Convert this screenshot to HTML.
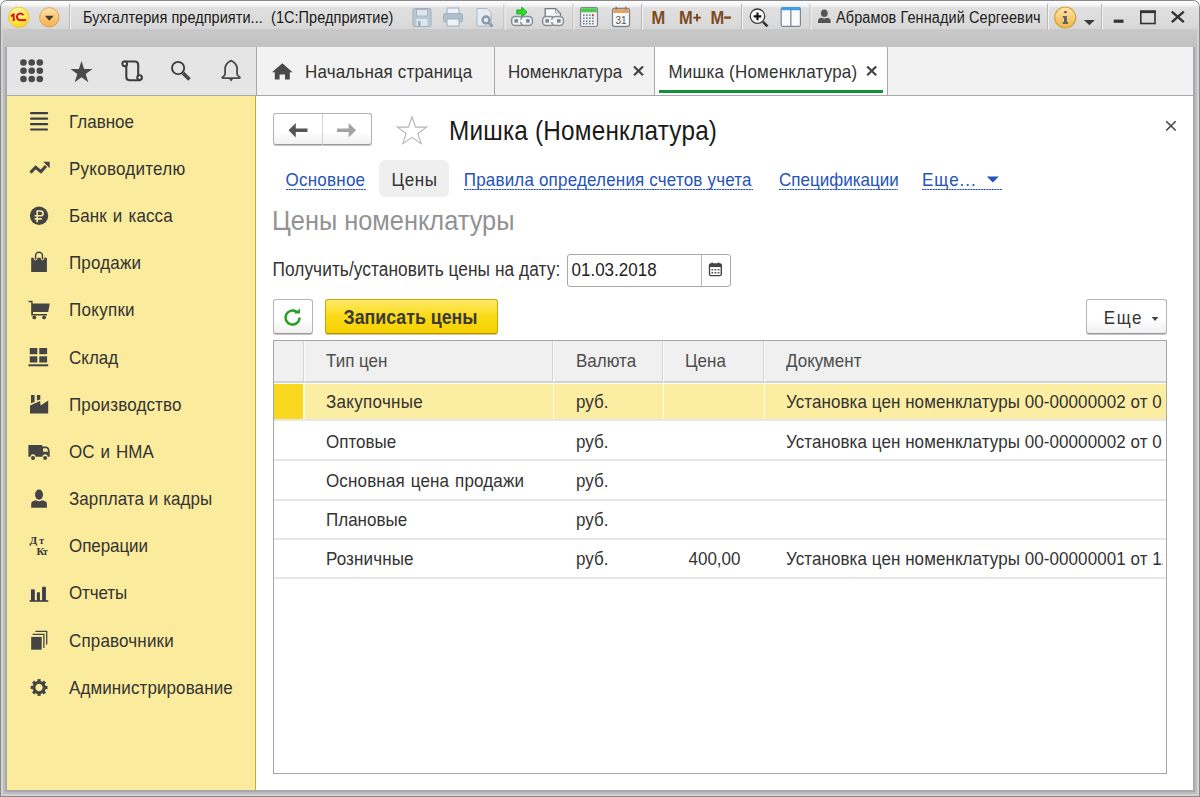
<!DOCTYPE html>
<html><head><meta charset="utf-8">
<style>
*{box-sizing:border-box;margin:0;padding:0}
html,body{width:1200px;height:797px;overflow:hidden;background:#fff}
body{position:relative;font-family:"Liberation Sans",sans-serif;color:#333}
.a{position:absolute}
.t{position:absolute;white-space:pre;line-height:1;transform:scaleY(1.12);transform-origin:0 84.65%}
svg{position:absolute;overflow:visible}
#frame{left:0;top:0;width:1200px;height:797px;background:#8a8a8a;border-radius:7px 7px 0 0}
#f2{left:1px;top:1px;width:1198px;height:795px;background:#d2d2d2;border-radius:6px 6px 0 0}
#f3{left:3px;top:1px;width:1194px;height:793px;background:#bdbdbd;border-radius:6px 6px 0 0}
#f4{left:5px;top:1px;width:1190px;height:791px;background:#a7a8b0;border-radius:6px 6px 0 0}
#title{left:1px;top:1px;width:1198px;height:29px;background:linear-gradient(#fbfbfb,#f7f7f7 4px,#e0e0e0 7px,#dbdbdb 20px,#d6d6d6);border-radius:6px 6px 0 0}
#band{left:3px;top:29px;width:1194px;height:18px;background:linear-gradient(#c8c8c8,#c2c2c2)}
#secbar{left:7px;top:47px;width:249px;height:48px;background:#e5e5e5}
#tabbar{left:256px;top:47px;width:937px;height:48px;background:#f2f2f2}
#sidebar{left:7px;top:96px;width:248px;height:694px;background:#fbeb9c}
#main{left:256px;top:96px;width:937px;height:694px;background:#fff}
.sep{position:absolute;top:4px;width:1px;height:26px;background:#c4c4c4;box-shadow:1px 0 0 #fafafa}
.mi{font-size:17px;color:#333;left:69px}
.tab{position:absolute;top:47px;height:48px;border-left:1px solid #a8a8a8;border-right:1px solid #a8a8a8}
.tabt{font-size:17px;color:#333;top:64px}
.lnk{font-size:17px;color:#2553b9;top:172px}
.dot{position:absolute;height:1.2px;top:189.2px;background-image:linear-gradient(90deg,#2050b5 55%,rgba(37,83,185,0.3) 55%);background-size:2.7px 1.2px}
.hdr{font-size:17px;color:#4d4d4d;top:353px}
.cell{font-size:17px;color:#333}
</style></head><body>
<div id="frame" class="a"></div>
<div id="f2" class="a"></div>
<div id="f3" class="a"></div>
<div id="f4" class="a"></div>
<div id="title" class="a"></div>
<div id="band" class="a"></div>
<div id="secbar" class="a"></div>
<div id="tabbar" class="a"></div>
<div class="a" style="left:7px;top:95px;width:1186px;height:1px;background:#a9a9a9"></div>
<div id="sidebar" class="a"></div>
<div class="a" style="left:255px;top:96px;width:1px;height:694px;background:#c9ad2a"></div>
<div id="main" class="a"></div>

<!-- TITLEBAR -->
<!-- 1C logo -->
<svg style="left:0;top:0" width="1200" height="36" viewBox="0 0 1200 36">
<defs>
<radialGradient id="g1c" cx="0.45" cy="0.3" r="0.7"><stop offset="0" stop-color="#fff9b0"/><stop offset="0.6" stop-color="#ffe94a"/><stop offset="1" stop-color="#f7d21a"/></radialGradient>
<linearGradient id="gdd" x1="0" y1="0" x2="0" y2="1"><stop offset="0" stop-color="#ffe2a6"/><stop offset="1" stop-color="#f7b04c"/></linearGradient>
<linearGradient id="ginfo" x1="0" y1="0" x2="0" y2="1"><stop offset="0" stop-color="#ffe7a8"/><stop offset="1" stop-color="#f3b547"/></linearGradient>
</defs>
<circle cx="18.8" cy="17.3" r="10.3" fill="url(#g1c)" stroke="#e2c24a" stroke-width="0.8"/>
<g fill="#e0101a">
<path d="M10.6,15.6 L12.9,13.4 H14.7 V21.1 H12.7 V16.3 L11.4,17.2 Z"/>
</g>
<path d="M23.3,15.2 A3.4,3.4 0 1 0 19.4,20.1" fill="none" stroke="#e0101a" stroke-width="2"/>
<rect x="18.6" y="19.1" width="7.4" height="2" fill="#e0101a"/>
<circle cx="49.3" cy="17.3" r="9.7" fill="url(#gdd)" stroke="#d39a3a" stroke-width="0.8"/>
<polygon points="44.8,15.8 53.8,15.8 49.3,20.8" fill="#4a3a28"/>
<!-- separator after dropdown -->
<rect x="69" y="4" width="1" height="26" fill="#b9b9b9"/><rect x="70" y="4" width="1" height="26" fill="#f2f2f2"/>
<!-- save -->
<g opacity="0.9">
<rect x="413" y="8.5" width="18" height="18" rx="1.5" fill="#b4c6d6" stroke="#98aabb" stroke-width="1"/>
<rect x="416.5" y="9.5" width="11" height="6.5" fill="#dfe7ee" stroke="#98aabb" stroke-width="0.8"/>
<rect x="416.5" y="19" width="11" height="7" fill="#dfe7ee"/>
<rect x="418" y="21" width="2.5" height="5" fill="#98aabb"/>
</g>
<!-- print -->
<g>
<rect x="447" y="8" width="12" height="6" fill="#eef2f5" stroke="#9fb0bf" stroke-width="1"/>
<rect x="443.5" y="13.5" width="19" height="8.5" rx="2" fill="#aebfcd" stroke="#9fb0bf"/>
<rect x="447" y="19" width="12" height="7" fill="#eef2f5" stroke="#9fb0bf" stroke-width="1"/>
</g>
<!-- preview -->
<g>
<path d="M477,8.5 H487 L491,12.5 V26 H477 Z" fill="#e6ecf1" stroke="#a8b8c6" stroke-width="1"/>
<circle cx="486" cy="20" r="3.5" fill="#e4e9ee" stroke="#8a9aa8" stroke-width="2.4"/>
<path d="M488.6,22.6 L492.6,26.6" stroke="#8a9aa8" stroke-width="2.8"/>
</g>
<rect x="503.5" y="4" width="1" height="26" fill="#b9b9b9"/><rect x="504.5" y="4" width="1" height="26" fill="#f2f2f2"/>
<!-- link green arrow -->
<g>
<path d="M516.8,10 H521.8 V7.2 L527,12.3 L521.8,17.2 V13.8 H516.8 Z" fill="#2ee02e" stroke="#139a13" stroke-width="0.9" stroke-linejoin="round"/>
<rect x="511.6" y="16.6" width="11.6" height="8.8" rx="3.4" fill="#eef1f3" stroke="#86909a" stroke-width="1.5"/>
<rect x="520.8" y="16.6" width="11.6" height="8.8" rx="3.4" fill="#eef1f3" stroke="#86909a" stroke-width="1.5"/>
<rect x="514.4" y="19.2" width="3.6" height="3.4" fill="#7b858f"/><rect x="526" y="19.2" width="3.6" height="3.4" fill="#7b858f"/>
<rect x="518" y="19.8" width="8" height="2" fill="#fafafa"/>
</g>
<!-- link doc -->
<g>
<path d="M545.2,8.6 H555.6 L560.4,13.4 V18.5 H545.2 Z" fill="#f8f9fa" stroke="#6f7a86" stroke-width="1.3"/>
<path d="M555.6,9 V13 H560" fill="none" stroke="#9aa4ad" stroke-width="1"/>
<rect x="542.6" y="16.6" width="11.6" height="8.8" rx="3.4" fill="#eef1f3" stroke="#86909a" stroke-width="1.5"/>
<rect x="551.8" y="16.6" width="11.6" height="8.8" rx="3.4" fill="#eef1f3" stroke="#86909a" stroke-width="1.5"/>
<rect x="545.4" y="19.2" width="3.6" height="3.4" fill="#7b858f"/><rect x="557" y="19.2" width="3.6" height="3.4" fill="#7b858f"/>
<rect x="549" y="19.8" width="8" height="2" fill="#fafafa"/>
</g>
<rect x="572.5" y="4" width="1" height="26" fill="#b9b9b9"/><rect x="573.5" y="4" width="1" height="26" fill="#f2f2f2"/>
<!-- calculator -->
<g>
<rect x="580.5" y="7.5" width="17" height="19" rx="1.5" fill="#eef1f3" stroke="#7b8793" stroke-width="1.2"/>
<rect x="581.2" y="8.2" width="15.6" height="4" fill="#4cc94c"/>
<g fill="#6b7782">
<rect x="583" y="14.5" width="1.6" height="1.4"/><rect x="586" y="14.5" width="1.6" height="1.4"/><rect x="589" y="14.5" width="1.6" height="1.4"/>
<rect x="583" y="17.5" width="1.6" height="1.4"/><rect x="586" y="17.5" width="1.6" height="1.4"/><rect x="589" y="17.5" width="1.6" height="1.4"/>
<rect x="583" y="20.5" width="1.6" height="1.4"/><rect x="586" y="20.5" width="1.6" height="1.4"/><rect x="589" y="20.5" width="1.6" height="1.4"/><rect x="592" y="17.5" width="1.6" height="1.4"/><rect x="592" y="20.5" width="1.6" height="1.4"/>
<rect x="583" y="23" width="1.6" height="1.4"/><rect x="586" y="23" width="1.6" height="1.4"/><rect x="589" y="23" width="1.6" height="1.4"/><rect x="592" y="23" width="1.6" height="1.4"/>
</g>
<rect x="592" y="14.2" width="1.6" height="2" fill="#e02020"/>
</g>
<!-- calendar -->
<g>
<rect x="612.5" y="8.5" width="17" height="18" rx="2" fill="#fafafa" stroke="#7b8793" stroke-width="1.3"/>
<path d="M613.2,10.5 Q613.2,9.2 614.5,9.2 H627.5 Q628.8,9.2 628.8,10.5 V13 H613.2 Z" fill="#e8a060"/>
<rect x="615.5" y="6.8" width="1.6" height="3" fill="#b07040"/><rect x="625" y="6.8" width="1.6" height="3" fill="#b07040"/>
<text x="621" y="24.3" font-family="Liberation Sans" font-size="10" text-anchor="middle" fill="#555">31</text>
</g>
<rect x="641" y="4" width="1" height="26" fill="#b9b9b9"/><rect x="642" y="4" width="1" height="26" fill="#f2f2f2"/>
<!-- M M+ M- -->
<g fill="#7d4b1d" font-family="Liberation Sans" font-weight="700" font-size="16.5" transform="translate(0,23.8) scale(1,1.08) translate(0,-23.8)">
<text x="651.6" y="23.8">M</text>
<text x="679" y="23.8">M</text>
<text x="710.4" y="23.8">M</text>
</g>
<g fill="#7d4b1d">
<rect x="693.3" y="16.7" width="7.5" height="2"/><rect x="696.05" y="13.9" width="2" height="7.5"/>
<rect x="724.2" y="16.4" width="6.7" height="2.4"/>
</g>
<rect x="741" y="4" width="1" height="26" fill="#b9b9b9"/><rect x="742" y="4" width="1" height="26" fill="#f2f2f2"/>
<!-- zoom -->
<g>
<circle cx="757.5" cy="16.2" r="7.2" fill="#fdfdfd" stroke="#3a3a3a" stroke-width="1.3"/>
<path d="M753.7,16.4 H761.3 M757.5,12.6 V20.2" stroke="#111" stroke-width="2.1"/>
<path d="M763,21.8 L767.5,26.3" stroke="#333" stroke-width="2.6"/>
</g>
<!-- panels -->
<g>
<rect x="781.2" y="7.5" width="19.2" height="18.8" rx="1.5" fill="#fbfbfb" stroke="#7b8793" stroke-width="1.2"/>
<path d="M781.2,10.2 V8.8 Q781.2,7 783,7 H798.6 Q800.4,7 800.4,8.8 V10.2 Z" fill="#3c9ee6"/>
<rect x="790.2" y="9" width="1.3" height="17" fill="#7b8793"/>
</g>
<rect x="809.5" y="4" width="1" height="26" fill="#b9b9b9"/><rect x="810.5" y="4" width="1" height="26" fill="#f2f2f2"/>
<!-- user -->
<g fill="#555">
<ellipse cx="824.3" cy="13.2" rx="3.4" ry="3.8"/>
<path d="M818,23 V21 Q818,18.2 821.5,17.8 Q824.3,19.3 827.1,17.8 Q830.6,18.2 830.6,21 V23 Z"/>
</g>
<rect x="1047" y="4" width="1" height="26" fill="#b9b9b9"/><rect x="1048" y="4" width="1" height="26" fill="#f2f2f2"/>
<!-- info -->
<circle cx="1065.2" cy="17.5" r="10.5" fill="url(#ginfo)" stroke="#cfa23a" stroke-width="1.2"/>
<ellipse cx="1065.4" cy="12.2" rx="1.7" ry="1.1" fill="#5d636a"/><path d="M1062.8,15.9 H1066.9 V22.1 H1068.1 V24 H1062.7 V22.1 H1064 V17.7 H1062.8 Z" fill="#5d636a"/>
<polygon points="1083.9,19.9 1094.8,19.9 1089.35,25.2" fill="#3a3a3a"/>
<rect x="1101" y="4" width="1" height="26" fill="#b9b9b9"/><rect x="1102" y="4" width="1" height="26" fill="#f2f2f2"/>
<!-- window buttons -->
<rect x="1113.7" y="19.6" width="9.8" height="3.2" fill="#333"/>
<rect x="1140.8" y="11.3" width="14.2" height="12.2" fill="none" stroke="#333" stroke-width="1.6"/>
<rect x="1140" y="10.5" width="15.8" height="2.6" fill="#333"/>
<path d="M1171.8,11.6 L1183.8,22.2 M1183.8,11.6 L1171.8,22.2" stroke="#333" stroke-width="2.4"/>
</svg>
<div class="t" style="left:83px;top:11px;font-size:14.5px;letter-spacing:0.05px;color:#1a1a1a">Бухгалтерия предприяти...  (1С:Предприятие)</div>
<div class="t" style="letter-spacing:0.08px;left:836px;top:11px;font-size:14.5px;color:#222">Абрамов Геннадий Сергеевич</div>


<!-- SECTION BAR -->
<svg style="left:0;top:40px" width="260" height="56" viewBox="0 40 260 56">
<g fill="#4a4a4a">
<circle cx="23.5" cy="62.5" r="3.3"/><circle cx="31.7" cy="62.5" r="3.3"/><circle cx="39.8" cy="62.5" r="3.3"/>
<circle cx="23.5" cy="70.7" r="3.3"/><circle cx="31.7" cy="70.7" r="3.3"/><circle cx="39.8" cy="70.7" r="3.3"/>
<circle cx="23.5" cy="79" r="3.3"/><circle cx="31.7" cy="79" r="3.3"/><circle cx="39.8" cy="79" r="3.3"/>
<path d="M81.5,61 L84.1,69 H92.5 L85.7,74 L88.3,82.2 L81.5,77.2 L74.7,82.2 L77.3,74 L70.5,69 H78.9 Z"/>
</g>
<g fill="none" stroke="#3e3e3e" stroke-width="2.1">
<path d="M124,61.5 H135 Q138.2,61.5 138.2,65 V77.5"/>
<path d="M126.3,63.5 V76.5 Q126.3,80.3 130,80.3 H140.5"/>
<circle cx="124.7" cy="63.8" r="2.3" fill="#fafafa"/>
<circle cx="139.6" cy="77.6" r="2.3" fill="#fafafa"/>
<circle cx="178.1" cy="68" r="6.1" stroke-width="1.9"/>
</g>
<path d="M183,73 L189.5,79.5" stroke="#4a4a4a" stroke-width="3.8"/>
<g fill="none" stroke="#4a4a4a" stroke-width="1.8">
<path d="M231.1,60.6 Q225.3,63.3 225.1,68.5 V73.8 Q224.9,75.8 222.6,77 Q221.6,78.2 223.2,78.2 H239 Q240.6,78.2 239.6,77 Q237.3,75.8 237.1,73.8 V68.5 Q236.9,63.3 231.1,60.6 Z" stroke-linejoin="round"/>
</g>
<path d="M228.8,78.5 L231.1,81.6 L233.4,78.5 Z" fill="#4a4a4a"/>
</svg>


<!-- TABS -->
<div class="tab" style="left:256px;width:239px"></div>
<div class="tab" style="left:494px;width:161px;border-left:none"></div>
<div class="tab" style="left:654px;width:234px;background:#fff"></div>
<div class="a" style="left:659.3px;top:90.3px;width:223.7px;height:2.6px;background:#12903a"></div>
<svg style="left:270px;top:60px" width="26" height="24" viewBox="270 60 26 24">
<path d="M282.3,63.2 L292.6,72.3 H289.8 V79.4 H285 V74.6 H279.6 V79.4 H274.8 V72.3 H272 Z" fill="#4a4a4a"/>
</svg>
<div class="t tabt" style="letter-spacing:0.16px;left:305px">Начальная страница</div>
<div class="t tabt" style="left:508px">Номенклатура</div>
<div class="t tabt" style="letter-spacing:0.21px;left:668.5px">Мишка (Номенклатура)</div>
<svg style="left:630px;top:62px" width="260" height="18" viewBox="630 62 260 18">
<path d="M634,66.5 L643,75.3 M643,66.5 L634,75.3" stroke="#444" stroke-width="2.2"/>
<path d="M867.2,66.5 L876.2,75.3 M876.2,66.5 L867.2,75.3" stroke="#444" stroke-width="2.2"/>
</svg>


<!-- SIDEBAR -->
<div class="t mi" style="top:113.6px">Главное</div>
<div class="t mi" style="letter-spacing:0.25px;top:160.8px">Руководителю</div>
<div class="t mi" style="letter-spacing:0.1px;word-spacing:1.2px;top:207.9px">Банк и касса</div>
<div class="t mi" style="letter-spacing:0.15px;top:255.1px">Продажи</div>
<div class="t mi" style="letter-spacing:0.28px;top:302.3px">Покупки</div>
<div class="t mi" style="top:349.5px">Склад</div>
<div class="t mi" style="letter-spacing:0.15px;top:396.6px">Производство</div>
<div class="t mi" style="letter-spacing:0.1px;word-spacing:1px;top:443.8px">ОС и НМА</div>
<div class="t mi" style="letter-spacing:0.07px;top:491px">Зарплата и кадры</div>
<div class="t mi" style="letter-spacing:-0.07px;top:538.2px">Операции</div>
<div class="t mi" style="letter-spacing:-0.1px;top:585.3px">Отчеты</div>
<div class="t mi" style="letter-spacing:0.17px;top:632.5px">Справочники</div>
<div class="t mi" style="letter-spacing:0.1px;top:679.7px">Администрирование</div>
<svg style="left:0;top:0" width="60" height="797" viewBox="0 0 60 797">
<g fill="#3c3c46">
<rect x="30" y="112.1" width="18.1" height="2.2" rx="1"/>
<rect x="30" y="117.55" width="18.1" height="2.2" rx="1"/>
<rect x="30" y="123" width="18.1" height="2.2" rx="1"/>
<rect x="30" y="128.4" width="18.1" height="2.2" rx="1"/>
</g>
<g fill="#444">
<polyline points="30.5,172.6 35.6,167.3 40.9,171.6 46,166" fill="none" stroke="#444" stroke-width="3" stroke-linejoin="miter"/>
<polygon points="43.3,161.8 49.7,161.8 49.7,168.3"/>
<circle cx="39.06" cy="215.7" r="9.2"/>
</g>
<g fill="none" stroke="#fbeb9c" stroke-width="1.6">
<path d="M37.2,222.3 V211 H40.6 A2.4,2.4 0 0 1 40.6,215.8 H34.6 M34.6,218.9 H41.8"/>
</g>
<g fill="#444">
<path d="M31.2,257.8 H33.7 A1.9,2.6 0 0 0 37.5,257.8 H40.6 A1.9,2.6 0 0 0 44.4,257.8 H46.9 V272.1 H31.2 Z"/>
</g>
<path d="M35.6,259.6 V255.7 A3.45,3.45 0 0 1 42.5,255.7 V259.6" fill="none" stroke="#444" stroke-width="1.5"/>
<g fill="#444">
<path d="M28.6,300.7 H32.6 V303.6 H49.8 L48.2,312 H33 V314 H47 V315.4 H31.2 V302.2 H28.6 Z"/>
<circle cx="34.3" cy="317.4" r="1.9"/>
<circle cx="44.1" cy="317.4" r="1.9"/>
<rect x="29.8" y="348" width="7.5" height="6.2"/>
<rect x="39.3" y="348" width="7.8" height="6.2"/>
<rect x="29.8" y="356.3" width="7.5" height="6.2"/>
<rect x="39.3" y="356.3" width="7.8" height="6.2"/>
<rect x="28.4" y="364.3" width="19.8" height="2"/>
<polygon points="30,413.5 30,405.5 40.1,401 40.6,405.5 48.2,400.6 48.2,413.5"/>
<polygon points="31,395 34.6,395 34.6,402 31,403.3"/>
<polygon points="36.9,395 40.3,395 40.3,399.4 36.9,400.6"/>
<path d="M28.4,445 H42.2 V446.5 H46.5 Q48.5,446.5 49.2,449 L49.7,451 V456.8 H47.6 A2.5,2.5 0 0 0 42.6,456.8 H35.5 A2.5,2.5 0 0 0 30.5,456.8 H28.4 Z M43.1,448.2 V451.8 H48.2 L47.4,449 Q47,448.2 46,448.2 Z" fill-rule="evenodd"/>
<circle cx="33" cy="457.9" r="2"/>
<circle cx="45.1" cy="457.9" r="2"/>
<ellipse cx="39.06" cy="494.6" rx="4" ry="5.1"/>
<path d="M31.2,507.7 V503.5 Q31.2,501.3 34,500.7 L36,500.3 Q39,502 42,500.3 L44,500.7 Q46.9,501.3 46.9,503.5 V507.7 Z"/>
</g>
<g fill="#333" font-family="Liberation Serif" font-weight="700">
<text x="29.6" y="543.8" font-size="11.2">Д</text><text x="39.2" y="544.4" font-size="9.5">т</text>
<text x="36.6" y="554.8" font-size="10.8">К</text><text x="43" y="554.6" font-size="9.5">т</text>
</g>
<g fill="#3c3c46">
<rect x="31" y="589.4" width="3.8" height="11.5"/>
<rect x="36.9" y="592.3" width="3" height="8.6"/>
<rect x="42.1" y="586.8" width="3.8" height="14.1"/>
<rect x="29.6" y="600.2" width="18.7" height="1.6"/>
</g>
<g fill="#444">
<rect x="31.2" y="636.9" width="10.5" height="12.8"/>
</g>
<path d="M32.6,634.4 H43.9 V648.1 M35.4,631.4 H46.7 V644.5" fill="none" stroke="#444" stroke-width="1.3"/>
<g transform="translate(39.06,687.5)" fill="#444">
<path d="M0,-6.6 A6.6,6.6 0 1 1 -0.01,-6.6 Z M0,-3.7 A3.7,3.7 0 1 0 0.01,-3.7 Z" fill-rule="evenodd"/>
<rect x="-1.6" y="-8.4" width="3.2" height="3.4" transform="rotate(0)"/><rect x="-1.6" y="-8.4" width="3.2" height="3.4" transform="rotate(45)"/><rect x="-1.6" y="-8.4" width="3.2" height="3.4" transform="rotate(90)"/><rect x="-1.6" y="-8.4" width="3.2" height="3.4" transform="rotate(135)"/><rect x="-1.6" y="-8.4" width="3.2" height="3.4" transform="rotate(180)"/><rect x="-1.6" y="-8.4" width="3.2" height="3.4" transform="rotate(225)"/><rect x="-1.6" y="-8.4" width="3.2" height="3.4" transform="rotate(270)"/><rect x="-1.6" y="-8.4" width="3.2" height="3.4" transform="rotate(315)"/>
</g>
</svg>


<!-- FORM -->
<!-- nav buttons -->
<div class="a" style="left:272.5px;top:113px;width:99.5px;height:32.3px;border:1px solid #b2b2b2;border-bottom-color:#9a9a9a;border-radius:3px;background:linear-gradient(#fff 55%,#f1f1f3);box-shadow:0 1px 0 #c8c8c8"></div>
<div class="a" style="left:322.3px;top:114px;width:1.2px;height:30.5px;background:#d2d2d2"></div>
<svg style="left:280px;top:118px" width="90" height="26" viewBox="280 118 90 26">
<path d="M288.5,130.2 L295.8,123 V128.5 H307.5 V132 H295.8 V137.5 Z" fill="#555"/>
<path d="M356,130.2 L348.7,123 V128.5 H337 V132 H348.7 V137.5 Z" fill="#a3a3a3"/>
</svg>
<svg style="left:390px;top:110px" width="45" height="40" viewBox="390 110 45 40">
<path d="M412,116.8 L415.6,127.1 H426.6 L417.8,133.5 L421.1,143.6 L412,137.3 L402.9,143.6 L406.2,133.5 L397.4,127.1 H408.4 Z" fill="#fff" stroke="#b4b4b4" stroke-width="1.1" stroke-linejoin="miter"/>
</svg>
<div class="t" style="letter-spacing:0.21px;left:449px;top:120.4px;font-size:24.3px;color:#1a1a1a">Мишка (Номенклатура)</div>
<svg style="left:1160px;top:115px" width="22" height="22" viewBox="1160 115 22 22">
<path d="M1166.2,121.2 L1175.7,130.5 M1175.7,121.2 L1166.2,130.5" stroke="#444" stroke-width="1.6"/>
</svg>
<!-- links -->
<div class="a" style="left:379px;top:160.3px;width:70px;height:37px;border-radius:6px;background:#efefef"></div>
<div class="t lnk" style="letter-spacing:0.24px;left:285.5px">Основное</div>
<div class="dot" style="left:286px;width:80px"></div>
<div class="t" style="letter-spacing:0.6px;left:391.5px;top:172px;font-size:17px;color:#333">Цены</div>
<div class="t lnk" style="letter-spacing:0.18px;left:463.8px">Правила определения счетов учета</div>
<div class="dot" style="left:464px;width:289px"></div>
<div class="t lnk" style="left:779px">Спецификации</div>
<div class="dot" style="left:779px;width:119px"></div>
<div class="t lnk" style="letter-spacing:1px;left:922px">Еще...</div>
<svg style="left:985px;top:174px" width="16" height="10" viewBox="985 174 16 10"><polygon points="986.8,176.6 998.8,176.6 992.8,182.4" fill="#2553b9"/></svg>
<div class="dot" style="left:922px;width:80px"></div>
<!-- section title -->
<div class="t" style="left:272px;top:209.2px;font-size:25.4px;color:#929292">Цены номенклатуры</div>
<!-- date row -->
<div class="t" style="letter-spacing:0.06px;left:272.5px;top:262px;font-size:17.3px;color:#333">Получить/установить цены на дату:</div>
<div class="a" style="left:566.5px;top:254px;width:164.5px;height:32.5px;border:1px solid #a9a9a9;border-radius:3px;background:#fff"></div>
<div class="a" style="left:701px;top:255px;width:1px;height:30.5px;background:#b8b8b8"></div>
<div class="t" style="left:571.5px;top:262px;font-size:17px;color:#222">01.03.2018</div>
<svg style="left:705px;top:258px" width="22" height="22" viewBox="705 258 22 22">
<rect x="709.5" y="264" width="11.8" height="11.6" rx="1.3" fill="#fff" stroke="#444" stroke-width="1.4"/>
<rect x="709.5" y="264" width="11.8" height="3" fill="#444"/>
<rect x="711.4" y="262.6" width="1.6" height="2.4" fill="#444"/><rect x="717.8" y="262.6" width="1.6" height="2.4" fill="#444"/>
<g fill="#555"><rect x="711.5" y="269" width="1.7" height="1.5"/><rect x="714.6" y="269" width="1.7" height="1.5"/><rect x="717.7" y="269" width="1.7" height="1.5"/>
<rect x="711.5" y="272" width="1.7" height="1.5"/><rect x="714.6" y="272" width="1.7" height="1.5"/><rect x="717.7" y="272" width="1.7" height="1.5"/></g>
</svg>
<!-- buttons -->
<div class="a" style="left:272.5px;top:299px;width:40.5px;height:34.5px;border:1px solid #b4b4b4;border-bottom-color:#9a9a9a;border-radius:3px;background:linear-gradient(#fff 55%,#f0f0f2);box-shadow:0 1px 0 #c4c4c4"></div>
<svg style="left:280px;top:304px" width="26" height="26" viewBox="280 304 26 26">
<path d="M296.2,311.6 A7,7 0 1 0 299.5,318.4" fill="none" stroke="#22a022" stroke-width="2.5" stroke-linecap="round"/>
<polygon points="293.9,313.6 299.9,313.6 299.9,308.4" fill="#22a022"/>
</svg>
<div class="a" style="left:325px;top:299px;width:172.5px;height:34.5px;border:1px solid #c9a800;border-bottom-color:#b49200;border-radius:3px;background:linear-gradient(#fde96a,#fbdc1c 45%,#f6d000);box-shadow:0 1px 0 #d6c690"></div>
<div class="t" style="left:343.5px;top:309.5px;font-size:17.8px;font-weight:700;color:#3a3a36">Записать цены</div>
<div class="a" style="left:1086px;top:299px;width:80.5px;height:34.5px;border:1px solid #b4b4b4;border-bottom-color:#9a9a9a;border-radius:3px;background:linear-gradient(#fff 55%,#f0f0f2);box-shadow:0 1px 0 #c4c4c4"></div>
<div class="t" style="left:1103.8px;top:309.5px;font-size:17px;letter-spacing:1.5px;color:#333">Еще</div>
<svg style="left:1148px;top:314px" width="14" height="10" viewBox="1148 314 14 10"><polygon points="1151.6,317 1158.4,317 1155,321" fill="#444"/></svg>


<!-- TABLE -->
<div class="a" style="left:273px;top:340px;width:893.7px;height:434px;border:1px solid #a6a6a6;background:#fff"></div>
<div class="a" style="left:274px;top:341px;width:891.7px;height:40.5px;background:#f0f0f0"></div>
<div class="a" style="left:274px;top:381.3px;width:891.7px;height:1.7px;background:#d2d2d2"></div>
<!-- header separators -->
<div class="a" style="left:302.6px;top:341px;width:1px;height:40.5px;background:#d4d4d4"></div>
<div class="a" style="left:303.6px;top:341px;width:1.4px;height:40.5px;background:#fbfbfb"></div>
<div class="a" style="left:552px;top:341px;width:1px;height:40.5px;background:#d4d4d4"></div>
<div class="a" style="left:553px;top:341px;width:1.4px;height:40.5px;background:#fbfbfb"></div>
<div class="a" style="left:662px;top:341px;width:1px;height:40.5px;background:#d4d4d4"></div>
<div class="a" style="left:663px;top:341px;width:1.4px;height:40.5px;background:#fbfbfb"></div>
<div class="a" style="left:763px;top:341px;width:1px;height:40.5px;background:#d4d4d4"></div>
<div class="a" style="left:764px;top:341px;width:1.4px;height:40.5px;background:#fbfbfb"></div>
<div class="t hdr" style="left:326px">Тип цен</div>
<div class="t hdr" style="left:576px">Валюта</div>
<div class="t hdr" style="left:685px">Цена</div>
<div class="t hdr" style="left:786px">Документ</div>
<!-- selected row -->
<div class="a" style="left:274px;top:383.5px;width:891.7px;height:35.8px;background:#fbeda2"></div>
<div class="a" style="left:274px;top:383.5px;width:29px;height:35.8px;background:#f9d71e"></div>
<div class="a" style="left:303px;top:383.5px;width:1.6px;height:35.8px;background:#fffbe6"></div>
<div class="a" style="left:552.6px;top:383.5px;width:1.6px;height:35.8px;background:#fffbe6"></div>
<div class="a" style="left:662.6px;top:383.5px;width:1.6px;height:35.8px;background:#fffbe6"></div>
<div class="a" style="left:763.6px;top:383.5px;width:1.6px;height:35.8px;background:#fffbe6"></div>
<!-- row lines -->
<div class="a" style="left:274px;top:419px;width:891.7px;height:2px;background:#e6e6e6"></div>
<div class="a" style="left:274px;top:459px;width:891.7px;height:2px;background:#e6e6e6"></div>
<div class="a" style="left:274px;top:499px;width:891.7px;height:2px;background:#e6e6e6"></div>
<div class="a" style="left:274px;top:538px;width:891.7px;height:2px;background:#e6e6e6"></div>
<div class="a" style="left:274px;top:577px;width:891.7px;height:2px;background:#e6e6e6"></div>
<div style="position:absolute;left:274px;top:383px;width:888.5px;height:200px;overflow:hidden">
<div class="t cell" style="left:52px;top:11.2px;letter-spacing:0.3px">Закупочные</div>
<div class="t cell" style="left:302px;top:11.2px">руб.</div>
<div class="t cell" style="left:512px;letter-spacing:0.07px;top:11.2px">Установка цен номенклатуры 00-00000002 от 01.03.2018</div>
<div class="t cell" style="left:52px;top:50.5px">Оптовые</div>
<div class="t cell" style="left:302px;top:50.5px">руб.</div>
<div class="t cell" style="left:512px;letter-spacing:0.07px;top:50.5px">Установка цен номенклатуры 00-00000002 от 01.03.2018</div>
<div class="t cell" style="left:52px;top:89.8px;letter-spacing:0.15px;word-spacing:1px">Основная цена продажи</div>
<div class="t cell" style="left:302px;top:89.8px">руб.</div>
<div class="t cell" style="left:52px;top:129.1px">Плановые</div>
<div class="t cell" style="left:302px;top:129.1px">руб.</div>
<div class="t cell" style="left:52px;top:168.4px;letter-spacing:0.13px">Розничные</div>
<div class="t cell" style="left:302px;top:168.4px">руб.</div>
<div class="t cell" style="left:414.5px;top:168.4px">400,00</div>
<div class="t cell" style="left:512px;letter-spacing:0.07px;top:168.4px">Установка цен номенклатуры 00-00000001 от 12.02.2018</div>
</div>

</body></html>
